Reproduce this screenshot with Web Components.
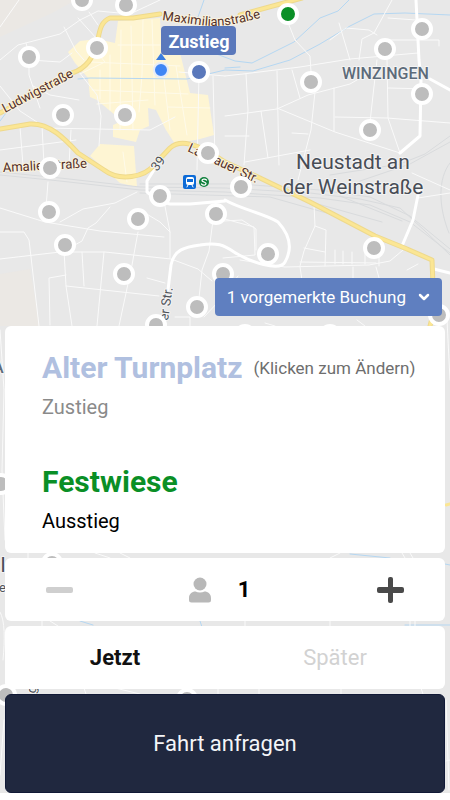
<!DOCTYPE html>
<html lang="de">
<head>
<meta charset="utf-8">
<meta name="viewport" content="width=device-width, initial-scale=1">
<title>Fahrt anfragen</title>
<style>
    body {
        margin: 0;
        background: #fff;
        font-family: Roboto, "Noto Sans", sans-serif;
    }
</style>
</head>
<body>
<ride-app>
    <city-map slot="map"></city-map>
    <booking-badge>1 vorgemerkte Buchung</booking-badge>
    <ride-card>
        <route-stop name="Alter Turnplatz" hint="(Klicken zum Ändern)" class="pickup">Zustieg</route-stop>
        <route-stop name="Festwiese" class="dropoff">Ausstieg</route-stop>
    </ride-card>
    <passenger-stepper value="1"></passenger-stepper>
    <time-switch>
        <span slot="now">Jetzt</span>
        <span slot="later">Später</span>
    </time-switch>
    <request-button>Fahrt anfragen</request-button>
</ride-app>

<script>
const template = (html) => {
    const t = document.createElement('template');
    t.innerHTML = html;
    return t;
};

class BaseElement extends HTMLElement {
    constructor() {
        super();
        this._shadowRoot = this.attachShadow({mode: 'open'});
        this._shadowRoot.appendChild(this.constructor.template.content.cloneNode(true));
    }
}

class RideApp extends BaseElement {
    static template = template(`
        <style>
            :host {
                box-sizing: border-box;
                min-height: 100vh;
                padding-bottom: 7px;
                display: flex;
            }
            main {
                position: relative;
                flex: 1;
                min-width: 0;
                display: flex;
                flex-direction: column;
                justify-content: flex-end;
                gap: 5px;
                padding: 0 5px;
            }
            ::slotted([slot=map]) {
                position: absolute;
                inset: 0;
            }
        </style>
        <main>
            <slot name="map"></slot>
            <slot></slot>
        </main>
    `);
}

class CityMap extends BaseElement {
    static template = template(`
        <style>
            :host {
                display: block;
                overflow: hidden;
                background: #e8e8e8;
            }
            svg { display: block; width: 100%; height: 100%; }
            path { fill: none; stroke-linejoin: round; stroke-linecap: round; }
            .minor { stroke: #fafafa; stroke-width: 1; }
            .major { stroke: #fff; stroke-width: 3; }
            .main-edge { stroke: #eed98c; stroke-width: 5; }
            .main { stroke: #fbe694; stroke-width: 3; }
            .rail { stroke: #d9dbdd; stroke-width: 1; }
            .water { stroke: #b5d7f2; stroke-width: 1; }
            .center { fill: #fef5d3; }
            .blocks { stroke: #fffbea; stroke-width: 1; }
            .field { fill: #ebe8e4; }
            .heading { fill: #3a7de0; }
            text {
                paint-order: stroke;
                stroke: #f4f4f4;
                stroke-width: 2px;
                stroke-linejoin: round;
            }
            .street { fill: #54302a; stroke: #fbf3dc; font-size: 13px; }
            .side { fill: #4f5359; font-size: 13px; }
            .district { fill: #5d6b7a; font-size: 16px; font-weight: 500; }
            .city { fill: #484d56; font-size: 21px; }
            .tag { fill: #fff; stroke: none; font-size: 18px; font-weight: 700; }
            .stop { fill: #bdbdbd; stroke: #fff; stroke-width: 4; }
            .stop.start { fill: #5a78bb; }
            .stop.end { fill: #0a8f26; }
        </style>
        <svg viewBox="0 0 450 793" preserveAspectRatio="xMidYMin slice" role="img" aria-label="Karte">
            <path class="field" d="M0 0H76L52 13 26 25 0 37ZM0 274L30 269 40 326H0Z"/>
            <path class="center" d="M118 21L160 18 162 55 180 53 190 93 208 95 214 135 200 139 175 144 166 130 156 110 148 108 149 126 140 130 136 142 113 137 113 125 120 122 115 115 97 100 90 97 88 78 75 63 68 52 80 41 97 39 115 43ZM100 144L134 146 137 187 120 183 90 156Z"/>
            <path class="blocks" d="M121 30L120 130M131 26L133 130M143 20L142 75 139 112M152 20L155 105M90 62L180 66M92 90L188 94M97 104L148 100M118 45L160 45M163 70L170 130M176 66L187 135M100 70V99M110 55V110M168 107L210 108M95 50L105 62 80 74M123 152L127 182"/>

            <path class="rail" d="M0 172L60 178 140 187 225 188 310 193 360 199 400 208 425 231 450 255M0 175L60 181 140 190 225 192 320 198 370 205 410 222 450 253M140 184L240 184 320 190 370 197 410 216 450 249M140 193L270 197 330 214M300 199L382 222M340 196L402 221M450 136L425 154 400 164 330 175M450 142L410 164 360 181M450 163C438 178 438 206 449 233"/>
            <path class="water" d="M0 121L6 113M78 79L90 78 187 79 225 70 253 71 290 60 320 44 350 26 374 14 405 13 450 15M206 50L235 61 252 63 294 42 320 18 338 11 349 0M204 0L198 17M225 68L240 67M311 707L320 703M350 554L390 558M80 621L93 625M200 621L202 627M405 625H450M420 559L450 565"/>

            <path class="minor" d="M0 60L18 45 60 34 80 20 98 11 130 14 160 0M0 27L19 0M26 43L29 54 29 75 40 108M64 27L76 51 84 60M78 18L97 39M89 12L98 25M30 60L60 62 72 53M0 86L20 111 40 124M33 86L50 95 79 100M44 88L60 74M79 72L97 95 101 116 99 146M43 128L150 130 175 117M20 127L23 165M42 125L44 165M71 130L69 165M0 150L76 140M179 72L225 76M199 74L197 170M213 76L215 160M225 76L243 74 300 67 350 59 418 53M289 25L295 40 310 56 311 72M246 74L248 110 244 165M277 71L279 165M292 70L300 98M225 116L277 109 308 95 350 84 369 73M277 108L335 132 400 153M261 111L268 158M315 92L311 130 298 180M334 88L334 131M335 117L387 118 450 123M387 58L388 118 400 153M377 60L370 122M339 23L350 60M359 60L362 39 374 33 392 0M377 35L369 30 346 28 330 40M385 40H439V46M388 88L430 89M416 20L388 18M225 136H249M245 162L310 150M292 133L308 134"/>
            <path class="minor" d="M0 208L45 222 100 231 164 237M0 259L60 252 105 252 171 259 198 269 212 281M48 182L45 221M60 222L83 209 115 203 137 192M110 207L96 223 88 228 82 241 73 246M0 232H24L29 240 31 257 39 326M64 250L66 286 72 326M82 252L84 286M104 252L97 326M138 232L132 265 119 326M66 286L159 296M50 325L49 278 66 275M163 196L170 232 170 258M140 210L160 222 170 232M213 220L209 251 202 270 199 298M224 221L242 220 256 229 256 250M225 219L254 227 255 255 223 258M240 260L285 267 369 265 390 261 403 250M314 205L315 226 304 251 300 266M315 226L326 230 325 266M304 248L325 252M335 250V264M343 251V264M352 252V264M365 253V264M379 248V266M300 262L376 263M238 276L223 296M300 267L302 280M353 267V280M376 267L381 285M418 198L450 193M412 173L450 190M407 270L418 264M175 317H190V326M147 278L165 283M204 317L220 300M265 323L275 326M357 320L365 326M400 315L440 310"/>
            <path class="minor" d="M0 330L4 390 2 470 5 540M447 320L450 380M0 612C5 620 5 640 3 660M95 553L110 558M120 553L130 558M340 553L330 558M50 621L58 626M245 621V626M330 621V626M84 688L86 694M115 688L140 694M218 688V694M259 688V694M341 688V694M0 775L4 720M446 761L450 760M446 700L449 790"/>
            <path class="minor" d="M402 553L405 558M410 553L413 558M410 621V626M415 621V626M421 688L423 694M28 553V558M42 621V626"/>
            <path class="major" d="M416 0L419 60 421 80 420 136 400 153M430 79L450 90M154 170L147 181 147 192 157 200 170 204 190 204 225 201M168 290L171 265C174 250 184 247 200 245 217 242 224 245 234 252 250 262 280 272 285 262 293 248 290 235 278 222 266 214 240 209 225 200M420 185L413 220 402 246M434 269L450 273"/>
            <path class="main-edge" d="M160 14L133 18 110 18C102 21 100 28 98 39 95 55 88 68 72 73L0 113M240 15L302 -2M0 129L30 124C50 123 65 139 78 153L104 170C120 182 145 177 154 165L170 148C180 139 195 142 225 162L260 178 310 202 375 236 407 249 432 260 434 310 430 326"/>
            <path class="main" d="M160 14L133 18 110 18C102 21 100 28 98 39 95 55 88 68 72 73L0 113M240 15L302 -2M0 129L30 124C50 123 65 139 78 153L104 170C120 182 145 177 154 165L170 148C180 139 195 142 225 162L260 178 310 202 375 236 407 249 432 260 434 310 430 326M446 505L450 504"/>

            <path id="maxi" d="M162 20L200 25C220 28 235 25 270 15"/>
            <text class="street"><textPath href="#maxi">Maximilianstraße</textPath></text>
            <text class="street" transform="translate(5 113) rotate(-28)">Ludwigstraße</text>
            <text class="street" transform="translate(3 172) rotate(-3)">Amalienstraße</text>
            <text class="street" transform="translate(187 151) rotate(25)">Landauer Str.</text>
            <text class="side" transform="translate(157 172) rotate(-52)">39</text>
            <text class="side" transform="translate(168 321) rotate(-82)">er Str.</text>
            <text class="district" x="342" y="79">WINZINGEN</text>
            <text class="district" x="-7" y="373">A</text>
            <text class="city" x="353" y="169" text-anchor="middle">Neustadt an</text>
            <text class="city" x="353" y="194" text-anchor="middle">der Weinstraße</text>
            <text class="city" x="-11" y="572">al</text>
            <text class="side" x="-1" y="592">e</text>
            <text class="side" transform="translate(35 694) rotate(-75)">g</text>

            <rect x="183" y="175" width="13" height="14" rx="2" fill="#0d6bd7"/>
            <rect x="186" y="177" width="8" height="8" rx="2" fill="#fff"/>
            <rect x="187" y="179" width="6" height="3" fill="#0d6bd7"/>
            <path d="M187 187L188 185M193 187L192 185" stroke="#fff"/>
            <circle cx="204" cy="182" r="5" fill="#12813e"/>
            <path d="M206.500 180C205 178.500 202 179 202 180.500 202 182 206 182 206 183.500 206 185.500 203 185.500 201.500 184" stroke="#fff" stroke-width="1.300"/>

            <g id="stops"></g>

            <path class="heading" d="M161 53L166 60H156Z"/>
            <circle cx="161" cy="70" r="7" fill="#3f86f4" stroke="#e4ecfa" stroke-width="2"/>
            <rect x="161" y="26" width="75" height="29" rx="4" fill="#5a78bb"/>
            <text class="tag" x="199" y="48" text-anchor="middle">Zustieg</text>
        </svg>
    `);

    connectedCallback() {
        const stops = [
            [82, 0], [126, 5], [29, 57], [97, 48], [63, 115], [125, 115],
            [50, 168], [208, 153], [49, 212], [160, 196], [138, 219], [65, 245],
            [241, 187], [216, 214], [124, 274], [223, 274], [197, 307], [156, 325],
            [268, 254], [374, 248], [311, 82], [385, 49], [422, 29], [422, 94],
            [370, 130], [439, 315], [245, 335], [330, 335], [1, 484], [52, 563],
            [6, 695], [187, 699],
            [199, 72, 'start'], [288, 14, 'end']
        ];
        this._shadowRoot.querySelector('#stops').innerHTML = stops
            .map(([x, y, kind = '']) => `<circle class="stop ${kind}" cx="${x}" cy="${y}" r="9"/>`)
            .join('');
    }
}

class BookingBadge extends BaseElement {
    static template = template(`
        <style>
            :host {
                display: flex;
                justify-content: flex-end;
                position: relative;
                padding: 0 3px 5px 0;
            }
            button {
                display: flex;
                align-items: center;
                gap: 12px;
                height: 38px;
                padding: 0 12px;
                border: 0;
                border-radius: 4px;
                background: #5f7fc0;
                color: #fff;
                font: 17px Roboto, sans-serif;
                cursor: pointer;
            }
        </style>
        <button type="button">
            <slot></slot>
            <svg width="12" height="8" viewBox="0 0 12 8" aria-hidden="true">
                <path d="M2 2L6 6 10 2" fill="none" stroke="#fff" stroke-width="2.500" stroke-linecap="round" stroke-linejoin="round"/>
            </svg>
        </button>
    `);
}

class RideCard extends BaseElement {
    static template = template(`
        <style>
            :host {
                display: flex;
                flex-direction: column;
                gap: 45px;
                position: relative;
                padding: 24px 20px 20px 37px;
                border-radius: 6px;
                background: #fff;
            }
        </style>
        <slot></slot>
    `);
}

class RouteStop extends BaseElement {
    static template = template(`
        <style>
            :host { display: block; color: #000; --name: #0a8f26; }
            :host(.pickup) { color: #8a8a8a; --name: #b0c0e0; }
            button {
                display: flex;
                flex-wrap: wrap;
                align-items: center;
                column-gap: 11px;
                padding: 0;
                border: 0;
                background: none;
                color: #6e6e6e;
                font: 17px/36px Roboto, sans-serif;
                cursor: pointer;
            }
            strong { color: var(--name); font-size: 30px; }
            .role { font-size: 20px; line-height: 24px; margin-top: 9px; }
        </style>
        <button type="button"><strong></strong><span class="hint"></span></button>
        <div class="role"><slot></slot></div>
    `);

    connectedCallback() {
        this._shadowRoot.querySelector('strong').textContent = this.getAttribute('name');
        this._shadowRoot.querySelector('.hint').textContent = this.getAttribute('hint') || '';
    }
}

class PassengerStepper extends BaseElement {
    static template = template(`
        <style>
            :host {
                display: flex;
                align-items: center;
                justify-content: space-between;
                position: relative;
                height: 63px;
                padding: 0 32px;
                border-radius: 6px;
                background: #fff;
            }
            button {
                display: flex;
                padding: 9px;
                border: 0;
                background: none;
                color: #4a4a4a;
                cursor: pointer;
            }
            button:disabled { color: #cfcfcf; }
            .count {
                display: flex;
                align-items: center;
                gap: 26px;
                padding-right: 12px;
            }
            output { font-size: 22px; font-weight: 700; }
            svg { display: block; fill: currentColor; }
            .person { color: #b8b8b8; }
        </style>
        <button type="button" class="less" aria-label="Weniger">
            <svg width="28" height="28" viewBox="0 0 28 28"><rect x="0" y="11" width="27" height="6" rx="2"/></svg>
        </button>
        <div class="count">
            <svg class="person" width="24" height="26" viewBox="0 0 24 26" aria-hidden="true">
                <circle cx="12" cy="7" r="6.500"/>
                <path d="M1 23V21C1 17 4 14.500 7.500 14.500 10 15.800 14 15.800 16.500 14.500 20 14.500 23 17 23 21V23Q23 25.500 20.500 25.500H3.500Q1 25.500 1 23Z"/>
            </svg>
            <output aria-label="Personen"></output>
        </div>
        <button type="button" class="more" aria-label="Mehr">
            <svg width="28" height="28" viewBox="0 0 28 28"><rect x="1" y="11" width="27" height="6" rx="2"/><rect x="12" y="1" width="5" height="26" rx="2"/></svg>
        </button>
    `);

    connectedCallback() {
        this.value = +this.getAttribute('value') || 1;
        this._shadowRoot.querySelector('.less').addEventListener('click', () => this.step(-1));
        this._shadowRoot.querySelector('.more').addEventListener('click', () => this.step(1));
        this.render();
    }

    step(n) {
        this.value = Math.max(1, this.value + n);
        this.render();
    }

    render() {
        this._shadowRoot.querySelector('output').textContent = this.value;
        this._shadowRoot.querySelector('.less').disabled = this.value <= 1;
    }
}

class TimeSwitch extends BaseElement {
    static template = template(`
        <style>
            :host {
                display: grid;
                grid-template-columns: 1fr 1fr;
                position: relative;
                height: 63px;
                border-radius: 6px;
                background: #fff;
            }
            button {
                padding: 0;
                border: 0;
                background: none;
                color: #d2d2d2;
                font: 22px Roboto, sans-serif;
                cursor: pointer;
            }
            button[aria-pressed=true] { color: #111; font-weight: 700; }
        </style>
        <button type="button" aria-pressed="true"><slot name="now"></slot></button>
        <button type="button" aria-pressed="false"><slot name="later"></slot></button>
    `);

    connectedCallback() {
        const buttons = this._shadowRoot.querySelectorAll('button');
        buttons.forEach(button => button.addEventListener('click', () => {
            buttons.forEach(b => b.setAttribute('aria-pressed', b === button));
        }));
    }
}

class RequestButton extends BaseElement {
    static template = template(`
        <style>
            :host { display: flex; position: relative; }
            button {
                flex: 1;
                height: 99px;
                border: 1px solid #111936;
                border-radius: 6px;
                background: #20283f;
                color: #f4f5f8;
                font: 22px Roboto, sans-serif;
                cursor: pointer;
            }
        </style>
        <button type="button"><slot></slot></button>
    `);
}

window.customElements.define('ride-app', RideApp);
window.customElements.define('city-map', CityMap);
window.customElements.define('booking-badge', BookingBadge);
window.customElements.define('ride-card', RideCard);
window.customElements.define('route-stop', RouteStop);
window.customElements.define('passenger-stepper', PassengerStepper);
window.customElements.define('time-switch', TimeSwitch);
window.customElements.define('request-button', RequestButton);
</script>
</body>
</html>
